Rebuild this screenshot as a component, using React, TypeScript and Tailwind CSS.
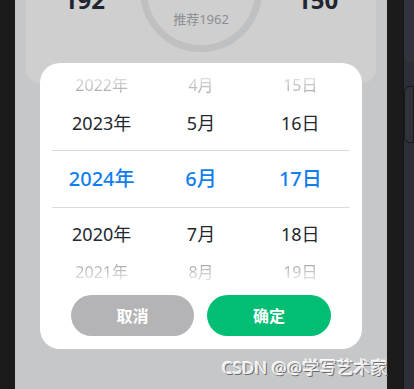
const years = ['2022年', '2023年', '2024年', '2020年', '2021年']
const months = ['4月', '5月', '6月', '7月', '8月']
const days = ['15日', '16日', '17日', '18日', '19日']

function Row({ idx, className }: { idx: number; className: string }) {
  const base =
    idx === 2
      ? 'text-[20px] font-medium text-[#0f7ef0]'
      : idx === 1 || idx === 3
        ? 'text-[18px] text-[#23272e]'
        : 'text-[16px] text-transparent bg-clip-text ' +
          (idx === 0 ? 'bg-linear-to-b from-[#e2e2e2] to-[#a9a9a9]' : 'bg-linear-to-b from-[#a9a9a9] to-[#e2e2e2]')
  return (
    <div className={`grid grid-cols-3 items-center ${className}`}>
      {[years[idx], months[idx], days[idx]].map((t) => (
        <div key={t} className="flex justify-center">
          <span className={`leading-none ${base}`}>{t}</span>
        </div>
      ))}
    </div>
  )
}

export default function App() {
  return (
    <div
      className="flex h-[389px] w-[414px] overflow-hidden"
      style={{ fontFamily: '"Noto Sans", "Noto Sans CJK SC", sans-serif' }}
    >
      <div className="w-[15px] shrink-0 bg-[#1b1b1b]" />

      <div className="relative w-[372px] shrink-0 bg-[#c6c7c9]">
        {/* card behind the dialog */}
        <div className="mx-[11px] mt-[-80px] h-[163px] rounded-[14px] bg-[#cfcfcf]">
          <div className="grid grid-cols-3 items-start">
            <div className="flex justify-center pt-[68px]">
              <span className="text-[24px] font-bold leading-none text-[#1f2631]">192</span>
            </div>
            <div className="flex justify-center pt-[10px]">
              <div className="flex h-[122px] w-[122px] shrink-0 flex-col items-center rounded-full border-[7px] border-[#bfc0c2] pt-[38px]">
                <span className="text-[26px] font-bold leading-none text-[#1f2631]">1720</span>
                <span className="mt-[12px] text-[13px] leading-none text-[#8d8e90]">推荐1962</span>
              </div>
            </div>
            <div className="flex justify-center pt-[68px]">
              <span className="text-[24px] font-bold leading-none text-[#1f2631]">150</span>
            </div>
          </div>
        </div>

        {/* date picker dialog */}
        <div className="absolute left-[25px] top-[63px] w-[322px] rounded-[20px] bg-white pb-[13px]">
          <div className="mx-[12px] pt-[2px]">
            <Row idx={0} className="h-[40px]" />
            <Row idx={1} className="h-[36px]" />
            <Row idx={2} className="mt-[9px] h-[58px] border-y border-[#dcdcdc]" />
            <Row idx={3} className="h-[52px]" />
            <Row idx={4} className="h-[24px]" />
          </div>
          <div className="mt-[11px] flex justify-center gap-[13px]">
            <button className="flex h-[41px] w-[123px] items-center justify-center rounded-full bg-[#b4b4b6] text-[16px] font-semibold text-white">
              取消
            </button>
            <button className="flex h-[41px] w-[124px] items-center justify-center rounded-full bg-[#02bd74] text-[16px] font-semibold text-white">
              确定
            </button>
          </div>
        </div>

        <div
          className="absolute left-[207px] top-[359px] whitespace-nowrap text-[17px] leading-none text-[#ececec]"
          style={{ textShadow: '1px 1px 0 #6d6d6d, -1px -1px 0 #ffffff' }}
        >
          CSDN @@学写艺术家
        </div>
      </div>

      <div className="w-[16px] shrink-0 bg-[#1b1b1b]" />
      <div className="flex w-[11px] shrink-0 flex-col border-l border-[#15161a] bg-[#2c2f36]">
        <div className="h-[62px] rounded-bl-[6px] bg-[#31343c]" />
        <div className="mt-[24px] h-[57px] rounded-l-[6px] border border-[#17181c] bg-[#30333a]" />
      </div>
    </div>
  )
}
